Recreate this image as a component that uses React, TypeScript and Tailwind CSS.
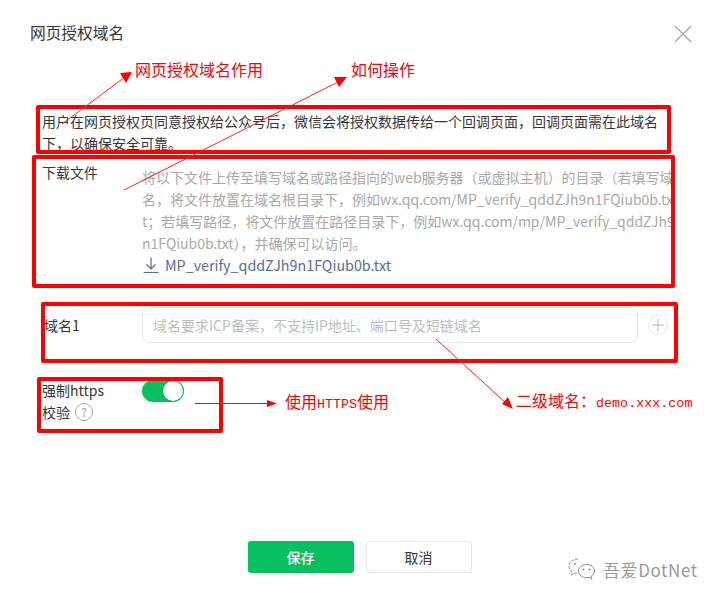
const font = "font-['Noto_Sans_CJK_SC','Liberation_Sans',sans-serif]";

const downloadLines = [
  '将以下文件上传至填写域名或路径指向的web服务器（或虚拟主机）的目录（若填写域',
  '名，将文件放置在域名根目录下，例如wx.qq.com/MP_verify_qddZJh9n1FQiub0b.tx',
  't；若填写路径，将文件放置在路径目录下，例如wx.qq.com/mp/MP_verify_qddZJh9',
  'n1FQiub0b.txt），并确保可以访问。',
];

function Marks() {
  return (
    <>
      <div className="absolute left-[36px] top-[105px] h-[49px] w-[635px] rounded-[2px] border-4 border-[#ff0000]" />
      <div className="absolute left-[32px] top-[155px] h-[133px] w-[643px] rounded-[2px] border-4 border-[#ff0000]" />
      <div className="absolute left-[41px] top-[302px] h-[61px] w-[637px] rounded-[2px] border-4 border-[#ff0000]" />
      <div className="absolute left-[37px] top-[377px] h-[56px] w-[186px] rounded-[2px] border-4 border-[#ff0000]" />

      <svg className="absolute left-0 top-0" width="721" height="602" fill="none">
        <g stroke="#ff2020" strokeWidth="1">
          <line x1="62" y1="124" x2="125" y2="77" />
          <line x1="124" y1="190" x2="340" y2="81" />
          <line x1="436" y1="339" x2="508" y2="405" />
          <line x1="195" y1="403.5" x2="270" y2="403.5" stroke="#ff0000" />
        </g>
        <g fill="#ff0000">
          <polygon points="132,72 120,73 126,83" />
          <polygon points="347,77 334,77 339,87" />
          <polygon points="513,409 508,397 502,404" />
          <polygon points="277,403.5 267,400 267,407" />
        </g>
      </svg>

      <span className="absolute left-[135px] top-[57px] text-[16px] leading-[24px] text-[#ff0000]">网页授权域名作用</span>
      <span className="absolute left-[351px] top-[57px] text-[16px] leading-[24px] text-[#ff0000]">如何操作</span>
      <span className="absolute left-[285px] top-[389px] text-[16px] leading-[24px] text-[#ff0000]">
        使用<span className="font-['Liberation_Mono',monospace] text-[13.33px]">HTTPS</span>使用
      </span>
      <span className="absolute left-[516px] top-[388px] text-[16px] leading-[24px] text-[#ff0000]">
        二级域名：<span className="font-['Liberation_Mono',monospace] text-[13.4px]">demo.xxx.com</span>
      </span>
    </>
  );
}

function WeChatMark() {
  return (
    <svg width="30" height="26" viewBox="0 0 30 26" fill="none" stroke="#8a8a8a" strokeWidth="1">
      <path d="M11 2C5.5 2 2 5.5 2 9.5c0 2.4 1.3 4.3 3.2 5.6L4.5 18l3-1.6c1 .3 1.6.4 2.6.4" strokeDasharray="3 1.2" />
      <path d="M19.5 7.5c-4.6 0-8 3-8 6.6s3.4 6.6 8 6.6c1 0 1.8-.1 2.6-.4l2.7 1.5-.7-2.5c2-1.2 3.4-3 3.4-5.2 0-3.6-3.4-6.6-8-6.6z" />
      <circle cx="16.5" cy="12.5" r="1" fill="#8a8a8a" stroke="none" />
      <circle cx="22.5" cy="12.5" r="1" fill="#8a8a8a" stroke="none" />
      <circle cx="8" cy="7" r="1" fill="#8a8a8a" stroke="none" />
    </svg>
  );
}

export default function App() {
  return (
    <div className={`relative h-[602px] w-[721px] overflow-hidden bg-white text-[14px] leading-[22px] text-[#353535] ${font}`}>
      <header className="flex items-start justify-between pl-[30px] pr-[29px] pt-[22px]">
        <h1 className="text-[15.7px] font-normal leading-[22px]">网页授权域名</h1>
        <svg className="mt-[3px]" width="18" height="18" viewBox="0 0 18 18" stroke="#a3a3a3" strokeWidth="1.2">
          <path d="M1 1l16 16M17 1L1 17" />
        </svg>
      </header>

      <p className="ml-[42px] mt-[66px] w-[620px]">
        用户在网页授权页同意授权给公众号后，微信会将授权数据传给一个回调页面，回调页面需在此域名下，以确保安全可靠。
      </p>

      <section className="ml-[42px] mt-[7px] flex">
        <div className="w-[100px]">下载文件</div>
        <div className="relative top-[5px] w-[536px] overflow-hidden text-[#a8a8a8]">
          {downloadLines.map((line) => (
            <div key={line} className="whitespace-nowrap">{line}</div>
          ))}
          <a className="flex items-center gap-[5px] text-[14.3px] text-[#576b95]">
            <svg width="18" height="18" viewBox="0 0 18 18" fill="none" stroke="#576b95" strokeWidth="1.2">
              <path d="M9 1.5v11M4.5 8.5L9 13l4.5-4.5M1.5 16.5h15" />
            </svg>
            MP_verify_qddZJh9n1FQiub0b.txt
          </a>
        </div>
      </section>

      <section className="ml-[44px] mt-[36px] flex items-center">
        <div className="w-[98px]">域名1</div>
        <div className="flex h-[36px] w-[496px] items-center rounded-[8px] border border-[#e4e8eb] pl-[10px] text-[14px] text-[#bdbdbd]">
          域名要求ICP备案，不支持IP地址、端口号及短链域名
        </div>
        <div className="ml-[10px] flex h-[20px] w-[20px] items-center justify-center rounded-full border border-[#e4e8eb]">
          <svg width="12" height="12" viewBox="0 0 12 12" stroke="#b5b5b5" strokeWidth="1">
            <path d="M6 0v12M0 6h12" />
          </svg>
        </div>
      </section>

      <section className="ml-[42px] mt-[36px] flex">
        <div className="w-[100px]">
          <div>强制https</div>
          <div className="flex items-center gap-[5px]">
            校验
            <span className="flex h-[18px] w-[18px] items-center justify-center rounded-full border border-[#a8a8a8] text-[12px] leading-none text-[#a8a8a8]">?</span>
          </div>
        </div>
        <div className="mt-[1px] flex h-[22px] w-[42px] items-center justify-end rounded-full bg-[#07c160] pr-[1px]">
          <div className="h-[20px] w-[20px] rounded-full bg-white shadow-sm" />
        </div>
      </section>

      <footer className="mt-[118px] flex justify-center gap-[12px] pr-[2px]">
        <button className="h-[32px] w-[106px] rounded-[3px] bg-[#07c160] text-[14px] font-medium text-white">保存</button>
        <button className="h-[32px] w-[106px] rounded-[3px] border border-[#e4e8eb] bg-white text-[14px] text-[#353535]">取消</button>
      </footer>

      <div className="absolute left-[567px] top-[557px] flex items-center gap-[6px] text-[17px] leading-[24px] tracking-[0.6px] text-[#999999]">
        <WeChatMark />
        <span>吾爱DotNet</span>
      </div>

      <Marks />
    </div>
  );
}
